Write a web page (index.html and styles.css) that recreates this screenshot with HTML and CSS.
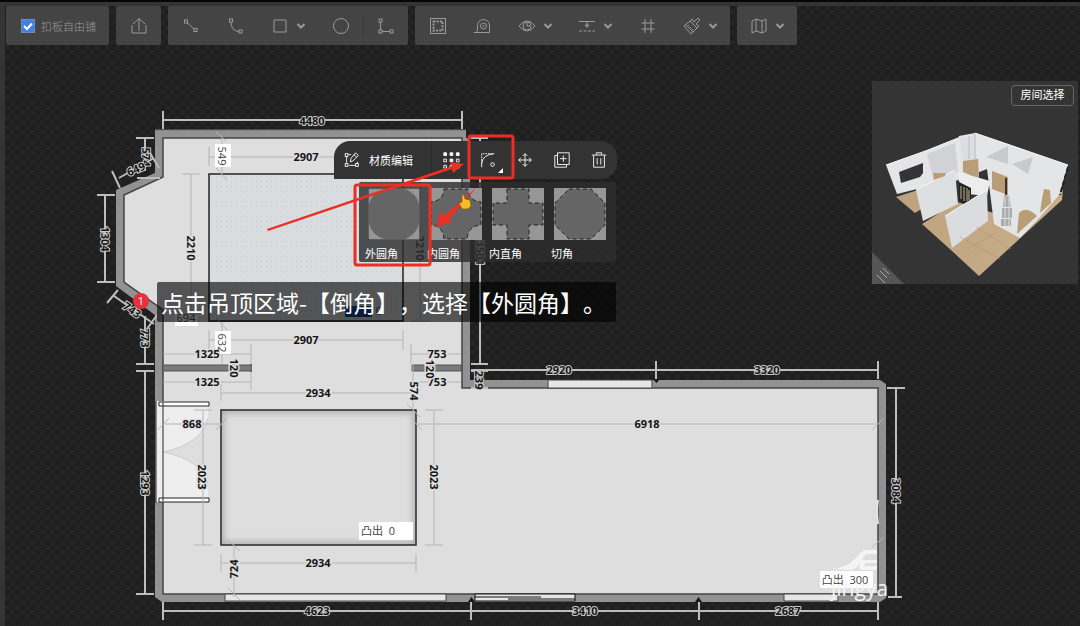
FILE: index.html
```html
<!DOCTYPE html>
<html lang="zh-CN">
<head>
<meta charset="utf-8">
<title>吊顶设计</title>
<link rel="stylesheet" href="styles.css">
</head>
<body>
<svg class="defs" width="0" height="0" aria-hidden="true">
  <symbol id="chev" viewBox="0 0 10 10"><path d="M1.500 3 5 6.500 8.500 3" stroke-width="2"/></symbol>
</svg>
<main class="app">
  <svg class="plan" aria-label="户型平面图">
    <defs>
      <pattern id="check" width="10" height="10" patternUnits="userSpaceOnUse"><rect width="10" height="10" fill="#1e1e1e"/><path d="M0 0h5v5H0zM5 5h5v5H5z" fill="#242424"/></pattern>
      <pattern id="dots" width="5" height="5" patternUnits="userSpaceOnUse"><rect width="5" height="5" fill="#d9dde0"/><path d="M1 1h1v1H1z" fill="#c3cad3"/></pattern>
      <linearGradient id="wood" x1="0" x2="1"><stop offset="0" stop-color="#bda27d"/><stop offset="1" stop-color="#c9b08c"/></linearGradient>
      <filter id="soft"><feGaussianBlur stdDeviation="3"/></filter>
      <clipPath id="inset"><path d="M221 410H416V545H221z"/></clipPath>
    </defs>
    <rect width="100%" height="100%" fill="url(#check)"/>
    <rect width="5" height="100%" fill="#343434"/>
    <rect width="100%" height="6" fill="#343434"/>
    <rect width="100%" height="2" fill="#050505"/>

    <path d="M155 130H466V138H470V380H880L886 384V598L880 602H162L155 597V315L116 286V190L155 173Z" fill="#929292"/>
    <path d="M155 130H466" stroke="#777"/>
    <path d="M163 138H462V388H878V594H163V310L124 282V195L163 177Z" fill="#dedede" stroke="#444" stroke-width="1.500"/>
    <path d="M163 365H251V371H163zM412 365H461V371H412z" fill="#7b7b7b" stroke="#555"/>
    <path d="M251 364V372" stroke="#222" stroke-width="2"/>

    <path d="M209 174H403V321H209z" fill="url(#dots)" stroke="#222" stroke-width="1.500"/>
    <path d="M221 410H416V545H221z" fill="#dedede"/>
    <g clip-path="url(#inset)"><path d="M221 410H416V545H221z" fill="none" stroke="#aaa" stroke-width="6" filter="url(#soft)"/></g>
    <path d="M221 410H416V545H221z" fill="none" stroke="#292929" stroke-width="1.500"/>

    <path d="M156 401H208V418Q202 444 163 452Q202 460 208 484V502H156z" fill="#eee"/>
    <path d="M163 452Q202 444 208 418M163 452Q202 460 208 484" fill="none" stroke="#ccc"/>
    <path d="M159 402H209V406H159zM159 498H209V502H159z" fill="#fff" stroke="#222"/>
    <path d="M156 401V503M163 402V501" stroke="#222"/>

    <g fill="#e6e6e6" stroke="#444">
      <path d="M225 594H446V601H225zM548 380H652V388H548zM784 594H838V601H784z"/>
      <path d="M475 594H575V601H475zM475 597H541M508 599H575" stroke="#111"/>
    </g>
    <path d="M653 379h7l-3.500 4zM468 602l3.500-5 3.500 5zM695 602l3.500-5 3.500 5z" fill="#181818"/>

    <g class="dim-out">
      <path d="M163 120H461M163 111V129M462 111V129"/>
      <path d="M145 138V171M136 138H154M137 178H160M119 178L154 158M112 171L120 188M150 153L159 168"/>
      <path d="M105 195V282M97 195H115M97 282H115M114 296L154 324M107 303L118 290M147 329L157 315"/>
      <path d="M145 316V364M136 364H154M136 371H154M145 371V594M136 594H154"/>
      <path d="M480 138V364M471 138H488M471 364H488M471 371H488M480 371V388M471 388H488"/>
      <path d="M471 370H877M656 361V379M878 361V379"/>
      <path d="M896 388V596M887 388H905M888 597H902"/>
      <path d="M163 611H877M163 602V620M471 602V620M699 602V620M878 602V620"/>
    </g>
    <g class="dim-in">
      <path d="M209 157H403M209 147V166M191 174V321M182 174H200M182 321H200M222 138V174M216 132L227 142M216 168L227 180"/>
      <path d="M209 340H403M209 330V350M403 330V350M222 322V364M216 318L227 330"/>
      <path d="M163 354H251M163 382H251M251 344V390M411 354H461M411 382H461M411 344V364"/>
      <path d="M221 393H416M221 384V401M413 364V410M407 404L420 417"/>
      <path d="M163 424H221M158 430L169 418M216 430L227 418M416 424H878M411 418L422 430M872 430L884 418"/>
      <path d="M203 410V545M194 410H212M194 545H212M434 410V545M425 410H443M425 545H443"/>
      <path d="M221 563H416M221 554V572M416 554V572M234 545V597M228 540L240 551M228 588L240 600M872 547L884 537"/>
      <path d="M420 175V320M411 321H430"/>
    </g>

    <g fill="#fff"><path d="M215 144h16v23h-16zM215 331h16v23h-16zM175 315h23v11h-23zM359 522h54v18h-54zM820 571h53v17h-53z"/></g>
    <g class="num halo">
      <text x="312" y="125">4480</text>
      <text transform="translate(146 157) rotate(90)" y="4">574</text>
      <text transform="translate(136 169) rotate(-24)" y="4">649</text>
      <text transform="translate(105 239) rotate(90)" y="4">1304</text>
      <text transform="translate(132 310) rotate(35)" y="4">743</text>
      <text transform="translate(145 338) rotate(90)" y="4">773</text>
      <text transform="translate(145 483) rotate(90)" y="4">1293</text>
      <text transform="translate(479 380) rotate(90)" y="4">239</text>
      <text transform="translate(480 253) rotate(90)" y="4">3501</text>
      <text x="559" y="374">2920</text><text x="767" y="374">3320</text>
      <text transform="translate(896 491) rotate(90)" y="4">3084</text>
      <text x="317" y="615">4623</text><text x="585" y="615">3410</text><text x="788" y="615">2687</text>
    </g>
    <g class="num">
      <text x="306" y="161">2907</text><text x="306" y="344">2907</text>
      <text transform="translate(191 248) rotate(90)" y="4">2210</text>
      <text transform="translate(420 248) rotate(90)" y="4">2210</text>
      <text x="207" y="358">1325</text><text x="207" y="386">1325</text>
      <text x="437" y="358">753</text><text x="437" y="386">753</text>
      <text transform="translate(234 368) rotate(90)" y="4">120</text>
      <text transform="translate(430 369) rotate(90)" y="4">120</text>
      <text transform="translate(414 391) rotate(90)" y="4">574</text>
      <text x="318" y="397">2934</text><text x="318" y="567">2934</text>
      <text x="192" y="428">868</text><text x="647" y="428">6918</text>
      <text transform="translate(202 477) rotate(90)" y="4">2023</text>
      <text transform="translate(434 477) rotate(90)" y="4">2023</text>
      <text transform="translate(234 569) rotate(-90)" y="4">724</text>
    </g>
    <g class="tag">
      <text transform="translate(222 156) rotate(90)" y="4">549</text>
      <text transform="translate(222 343) rotate(90)" y="4">632</text>
      <text x="186" y="322">694</text>
      <text x="378" y="535" xml:space="preserve">凸出  0</text>
      <text x="845" y="584" xml:space="preserve">凸出  300</text>
    </g>
    <path d="M345 306h27v11h-27z" fill="#164c9c"/>
    <text class="tag" x="379" y="315">0</text>
    <path d="M831 569C845 568 853 562 858 555L864 550H877V554H867L863 557V560H877V563H868Q864 563 864 566H877V570H862Q858 569 859 562Q858 570 849 570Z" fill="#f4f4f4"/>
    <path d="M878 500Q876 510 878 524" fill="none" stroke="#e4e4e4" stroke-width="2"/>
    <text class="mark" x="831" y="596">jingya</text>
  </svg>

  <header class="toolbar">
    <div class="group check-group">
      <label class="check"><input type="checkbox" checked><svg viewBox="0 0 14 14"><rect width="14" height="14" rx="2" fill="#3f7fe8"/><path d="M3 7 6 10 11 4.500" stroke="#fff" stroke-width="2"/></svg><span>扣板自由铺</span></label>
    </div>
    <div class="group">
      <button class="tool" aria-label="导出"><svg viewBox="0 0 20 20"><path d="M3 9V17H17V9M10 15V3M4 8 10 2.500 16 8"/></svg></button>
    </div>
    <div class="group">
      <button class="tool" aria-label="直线"><svg viewBox="0 0 20 20"><path d="M6 6.500 13 13"/><rect x="3.500" y="4" width="3" height="3"/><rect x="13" y="12.500" width="3" height="3"/></svg></button>
      <button class="tool" aria-label="弧线"><svg viewBox="0 0 20 20"><path d="M5 6Q5 15 13 15.500"/><rect x="3.500" y="3" width="3" height="3"/><rect x="13" y="14" width="3" height="3"/></svg></button>
      <button class="tool wide" aria-label="矩形"><svg viewBox="0 0 20 20"><path d="M4 4H16V16H4z"/></svg><svg class="chev"><use href="#chev"/></svg></button>
      <button class="tool" aria-label="圆形"><svg viewBox="0 0 20 20"><circle cx="10" cy="10" r="7.500"/></svg></button>
      <button class="tool divided" aria-label="折线"><svg viewBox="0 0 20 20"><path d="M4.500 6V14M6 15.500H14"/><rect x="3" y="3" width="3" height="3"/><rect x="3" y="14" width="3" height="3"/><rect x="14" y="14" width="3" height="3"/></svg></button>
    </div>
    <div class="group">
      <button class="tool" aria-label="区域"><svg viewBox="0 0 20 20"><rect x="2.500" y="2.500" width="15" height="15"/><rect x="5.500" y="5.500" width="9" height="9" stroke-width="2" stroke-dasharray="2 1.200"/></svg></button>
      <button class="tool" aria-label="测量"><svg viewBox="0 0 20 20"><path d="M1 16.500H16.500V9.500A6 6 0 1 0 4.500 9.500V14.500L3 16.500"/><circle cx="10.500" cy="10" r="3"/><circle cx="10.500" cy="10" r=".6"/></svg></button>
      <button class="tool wide" aria-label="显示"><svg viewBox="0 0 20 20"><path d="M2 10Q10 0 18 10Q10 20 2 10ZM10 6.500V10H13"/><circle cx="10" cy="10" r="4"/></svg><svg class="chev"><use href="#chev"/></svg></button>
      <button class="tool wide" aria-label="标高"><svg viewBox="0 0 20 20"><path d="M2 5.500H18M10 6V11"/><path d="M8 9H12L10 11.500z"/><path d="M2 15H18" stroke-dasharray="3 1.500"/></svg><svg class="chev"><use href="#chev"/></svg></button>
      <button class="tool" aria-label="网格"><svg viewBox="0 0 20 20"><path d="M7 3V17M13 3V17M3.500 7H16.500M3.500 13H16.500"/></svg></button>
      <button class="tool wide" aria-label="清理"><svg viewBox="0 0 20 20"><path d="M8 5 10 3 12 6 16 2 18 4 14 8 17 10 15 12ZM8 5 2 10 9 18 15 12ZM4 9 11 16M5 11 7 9M7 13 9 11M9 15 11 13"/></svg><svg class="chev"><use href="#chev"/></svg></button>
    </div>
    <div class="group">
      <button class="tool wide" aria-label="地图"><svg viewBox="0 0 20 20"><path d="M3 5 7 3 13 5 17 3V15L13 17 7 15 3 17ZM7 3V15M13 5V17"/></svg><svg class="chev"><use href="#chev"/></svg></button>
    </div>
  </header>

  <aside class="preview">
    <button class="room-select">房间选择</button>
    <svg class="model" viewBox="0 0 206 203" aria-label="三维预览">
      <path d="M24 116 46 109 54 125 43 132ZM50 143 85 121 125 133 163 130 191 107 190 119 107 195 80 170Z" fill="url(#wood)"/>
      <path d="M14 84 56 69 86 57 87 55 103 52 196 84 187 114 168 136 148 157 122 143 115 88 87 99 56 106 45 108 25 113Z" fill="#e4e5e6"/>
      <path d="M55 73 83 62 86 90 62 99Z" fill="#d0d2d5"/>
      <path d="M88 57 103 54V76L107 78V98L91 91Z" fill="#dcdddf"/><path d="M91 80 106 78 107 98 91 91Z" fill="#b99d77"/>
      <path d="M97 55V78M103 53V78" stroke="#babcc0"/>
      <path d="M114 76 136 65V83ZM140 83 161 76 156 93Z" fill="#c8cacd"/>
      <path d="M27 91 51 82V92L48 96 29 102Z" fill="#343434"/>
      <path d="M87 91 118 100 115 115 87 112Z" fill="#ededee"/>
      <path d="M87 101 99 107V120L93 123 87 119Z" fill="#222"/><path d="M89 105V118M92 106V120M95 107V120M97 109V119" stroke="#c8b18c"/>
      <path d="M44 109 83 89 86 123 51 140Z" fill="#dedfe1"/>
      <path d="M73 135 115 109 116 140 80 167Z" fill="#dbdcdf"/>
      <path d="M73 135 115 109M44 109 83 89M14 84 56 69 86 57M103 52 196 84" fill="none" stroke="#f7f7f7"/>
      <path d="M61 92 74 92 73 95 62 99Z" fill="#b99d77"/>
      <path d="M120 90 136 96V114L120 108Z" fill="#b99d77"/><path d="M134 97V114" stroke="#333" stroke-width="2"/>
      <path d="M132 114 137 115 139 126H131ZM130 127H140V137H130ZM129 138H139V145H129Z" fill="#a9abad"/><path d="M133 116V145M137 116V145" stroke="#ddd"/>
      <path d="M147 132Q154 124 165 135L145 153ZM170 118 172 108 178 109 179 122 168 132Z" fill="#b99d77"/>
      <path d="M196 86 188 114" stroke="#222" stroke-width="2" stroke-dasharray="5 2"/>
      <path d="M96 168 125 151M88 156 128 178M104 146 139 168" stroke="#ae936d" stroke-width=".5"/>
      <path d="M0 171 32 203H0Z" fill="#555"/><path d="M5 194 13 202M8 190 15 197M11 187 17 193" stroke="#aaa"/>
    </svg>
  </aside>

  <nav class="context" aria-label="区域操作">
    <button class="edit"><svg viewBox="0 0 20 20"><path d="M4 6V13M7 16H14M6 4H9M16 12V14"/><rect x="2.500" y="3" width="3" height="3"/><rect x="2.500" y="14" width="3" height="3"/><rect x="14" y="14" width="3" height="3"/><path d="M8 12 9 8 14 2 17 5 11 11ZM12 4 15 7"/></svg><span>材质编辑</span></button>
    <button aria-label="阵列"><svg viewBox="0 0 20 20"><path d="M2 2h3v3H2zM9 2h3v3H9zM16 2h3v3h-3zM9 9h3v3H9z" fill="#fff"/><path d="M2 9h3v3H2zM16 9h3v3h-3zM2 16h3v3H2zM9 16h3v3H9zM16 16h3v3h-3z"/></svg></button>
    <button aria-label="倒角"><svg viewBox="0 0 20 20"><path d="M3 18V14Q4 4 17 3"/><path d="M3 14V3H15" stroke-dasharray="2 1"/><circle cx="15" cy="15" r="2"/></svg></button>
    <button aria-label="移动"><svg viewBox="0 0 20 20"><path d="M10 3V17M3 10H17M7.500 5.500 10 3 12.500 5.500M7.500 14.500 10 17 12.500 14.500M5.500 7.500 3 10 5.500 12.500M14.500 7.500 17 10 14.500 12.500"/></svg></button>
    <button aria-label="复制"><svg viewBox="0 0 20 20"><path d="M5 2H18V15H5zM5 5H2V18H15V15M11.500 5V12M8 8.500H15"/></svg></button>
    <button aria-label="删除"><svg viewBox="0 0 20 20"><path d="M2 4.500H18M7 4V2H13V4M4 5V18H16V5M8 8V15M12 8V15"/></svg></button>
  </nav>

  <div class="corners">
    <button><svg viewBox="0 0 52 52"><rect width="52" height="52"/><path d="M16 1H37Q48 5 51 16V36Q48 47 37 51H16Q4 47 1 36V16Q4 5 16 1Z"/><path class="edge" d="M0 0V52H52V0Z"/></svg><span>外圆角</span></button>
    <button><svg viewBox="0 0 52 52"><rect width="52" height="52"/><path class="cut" d="M14 1H38Q39 13 51 14V37Q38 38 37 51H14Q13 38 1 37V14Q13 13 14 1Z"/></svg><span>内圆角</span></button>
    <button><svg viewBox="0 0 52 52"><rect width="52" height="52"/><path class="cut" d="M15 1H37V15H51V37H37V51H15V37H1V15H15Z"/></svg><span>内直角</span></button>
    <button><svg viewBox="0 0 52 52"><rect width="52" height="52"/><path class="cut" d="M15 1H37L51 15V37L37 51H15L1 37V15Z"/></svg><span>切角</span></button>
  </div>

  <p class="caption">点击吊顶区域-【倒角】，选择【外圆角】。</p>

  <svg class="marks" aria-hidden="true">
    <path d="M503 168V173H498Z" fill="#fff"/>
    <g fill="none" stroke="#ec2f25" stroke-width="3"><rect x="355" y="185" width="75" height="80" rx="2"/><rect x="469" y="136" width="44" height="42" rx="2"/></g>
    <path d="M267 229 452 166 450 162 464 164 453 173 452 169 268 231Z" fill="#ec2f25"/>
    <path d="M477 187 449 219 452 222 436 227 441 212 445 215Z" fill="#ec2f25"/>
    <path d="M462 195Q464 193 465 199L470 200 471 206 468 209H462L459 203 462 202Z" fill="#f8bd24" stroke="#75500c" stroke-width=".6"/>
    <circle cx="141" cy="301" r="8" fill="#e6303b"/>
    <text x="141" y="305">1</text>
  </svg>
</main>
</body>
</html>
```
FILE: styles.css
```css
* { box-sizing: border-box; }
body {
  margin: 0;
  background: #1e1e1e;
  color: #fff;
  font: 11px/16px "Noto Sans CJK SC", sans-serif;
}
.defs { position: absolute; }
.app { position: relative; min-height: 100vh; overflow: hidden; }
.plan, .marks { position: absolute; inset: 0; width: 100%; height: 100%; }
.marks { pointer-events: none; }
button {
  display: flex;
  align-items: center;
  margin: 0;
  padding: 0;
  border: 0;
  background: none;
  color: inherit;
  font: inherit;
}
button svg, .check svg { fill: none; stroke: currentColor; }

.toolbar { position: relative; display: flex; gap: 7px; padding: 6px; }
.group { display: flex; height: 39px; border-radius: 2px; background: #444; color: #999; }
.check-group { width: 103px; padding-left: 15px; }
.check { display: flex; align-items: center; gap: 6px; font-weight: 300; white-space: nowrap; }
.check input { position: absolute; opacity: 0; }
.check svg { width: 14px; height: 14px; }
.tool { justify-content: center; width: 45px; }
.tool svg { width: 20px; height: 20px; flex: none; }
.tool.wide { width: 60px; justify-content: flex-start; padding-left: 12px; gap: 6px; }
.tool .chev { width: 10px; height: 10px; }
.tool.divided { background: linear-gradient(#383838, #383838) 0 50% / 1px 20px no-repeat; }

.preview { position: absolute; top: 81px; right: 2px; width: 206px; background: #343434; }
.model { display: block; width: 100%; fill: none; }
.room-select {
  position: absolute;
  top: 4px;
  right: 4px;
  justify-content: center;
  width: 63px;
  height: 21px;
  padding-bottom: 3px;
  border: 1px solid #666;
  border-radius: 4px;
}

.context {
  position: absolute;
  left: 334px;
  top: 141px;
  display: flex;
  height: 38px;
  border-radius: 16px 16px 16px 0;
  background: #333;
}
.context button { justify-content: center; width: 37px; }
.context svg { width: 18px; height: 18px; }
.context .edit { justify-content: flex-start; width: 98px; padding-left: 9px; gap: 8px; border-right: 1px solid #292929; }

.corners {
  position: absolute;
  left: 359px;
  top: 182px;
  display: flex;
  padding: 6px 4px 0;
  width: 257px;
  height: 80px;
  border-radius: 2px;
  background: rgba(45, 45, 45, .82);
}
.corners button { flex-direction: column; width: 62px; }
.corners svg { width: 52px; height: 52px; }
.corners rect { fill: #969696; stroke: none; }
.corners path { fill: #656565; stroke: none; }
.corners .edge { fill: none; stroke: #222; }
.corners .cut { stroke: #222; stroke-dasharray: 4 3; }
.corners span { align-self: flex-start; padding-left: 2px; margin-top: 5px; }

.caption {
  position: absolute;
  left: 157px;
  top: 282px;
  margin: 0;
  padding: 0 10px 0 4px;
  width: 459px;
  border-radius: 2px;
  background: rgba(0, 0, 0, .62);
  font-size: 23px;
  line-height: 40px;
  white-space: nowrap;
  text-spacing-trim: space-all;
}

.dim-out { fill: none; stroke: #bdbdbd; stroke-width: 2; }
.dim-in { fill: none; stroke: #b4b4b4; stroke-width: 1; }
.num { font: bold 11px "Open Sans", sans-serif; text-anchor: middle; fill: #151515; stroke: #dedede; stroke-width: 3; paint-order: stroke; }
.halo { stroke: #c9c9c9; stroke-width: 2; }
.tag { font: 11px "Open Sans", "Noto Sans CJK SC", sans-serif; text-anchor: middle; fill: #444; }
.mark { font: 21px "Open Sans", sans-serif; fill: #f4f4f4; }
.marks text { font: 11px "Open Sans", sans-serif; text-anchor: middle; fill: #fff; }
```
